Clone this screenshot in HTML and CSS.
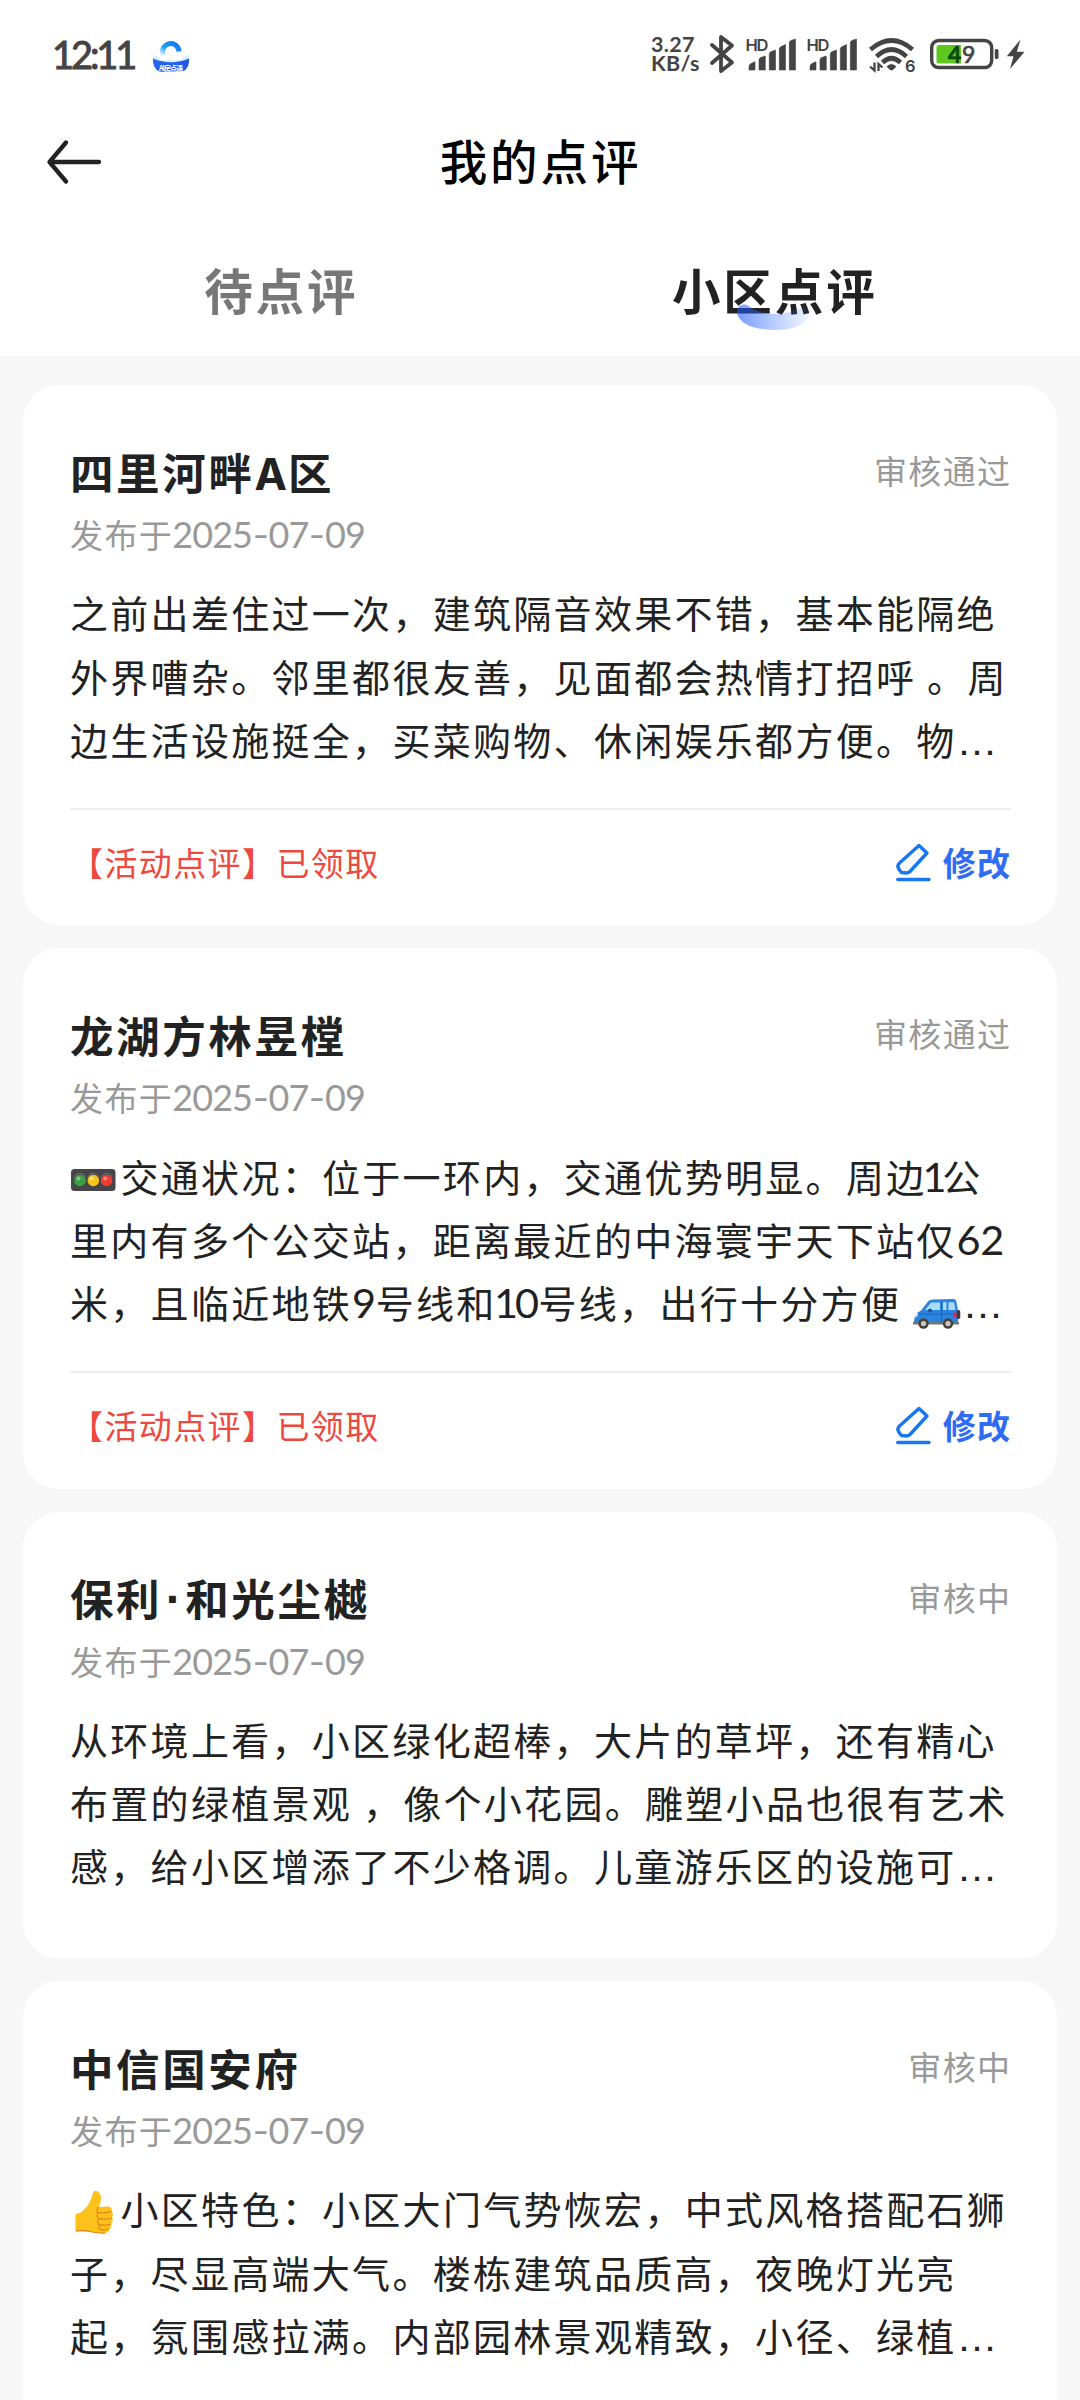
FILE: index.html
```html
<!DOCTYPE html>
<html lang="zh-CN">
<head>
<meta charset="utf-8">
<title>我的点评</title>
<link rel="stylesheet" href="styles.css">
</head>
<body>
<svg class="defs" width="0" height="0">
  <symbol id="edit" viewBox="0 0 38 40">
    <path d="M24 3.5 L32 11 L15 29.5 Q13.5 31 11 31 L6.5 30.5 Q3.5 27.5 2.8 24.5 Q3 22.5 4.5 21 Z" fill="none" stroke="#1677f0" stroke-width="3.4" stroke-linejoin="round"/>
    <path d="M2.8 37.5 H34" stroke="#1677f0" stroke-width="3.4" stroke-linecap="round"/>
  </symbol>
  <symbol id="signal" viewBox="745 32 52 44">
    <path d="M749 70 v-3 q0 -3 3 -4 l3 -1.3 v8.3z M759 70 V60 q0 -1.600 1.500 -2.400 L765.300 56 V70z M769.300 70 V54 q0 -1.500 1.500 -2.200 L775.500 50 V70z M779.300 70 V49 q0 -1.500 1.500 -2.200 L785.500 44.500 V70z M789.300 70 V43 q0 -1.800 1.500 -2.500 L795.500 39 V70z" fill="#444" stroke="#444" stroke-width=".6" stroke-linejoin="round"/>
    <text x="745.500" y="50.500" font-size="16.500" textLength="23" class="glyph-text">HD</text>
  </symbol>
</svg>

<header class="top">
  <div class="status-bar">
    <div class="status-left">
      <span class="clock">12:11</span>
      <svg class="app" width="36" height="36" viewBox="153 36 36 36">
        <defs>
          <linearGradient id="ring" x1="0" y1="1" x2="1" y2="0"><stop offset="0" stop-color="#d8f1ff"/><stop offset=".4" stop-color="#18a4f8"/><stop offset="1" stop-color="#1570f0"/></linearGradient>
          <linearGradient id="bowl" x1="0" y1="0" x2="1" y2="0"><stop offset="0" stop-color="#2468ee"/><stop offset="1" stop-color="#2257e6"/></linearGradient>
        </defs>
        <path d="M153 55 Q158 56 161 60 H181 Q184 56 189 55 V62 H153z" fill="#d9effd"/>
        <path d="M163 55 A8.300 8.300 0 1 1 179 51.500" fill="none" stroke="url(#ring)" stroke-width="5"/>
        <path d="M153 58.500 Q171 66 189 58.500 V62 Q188 72 178 72 H164 Q154 72 153 62z" fill="url(#bowl)"/>
        <text x="159" y="70.500" font-size="7" textLength="24" class="app-text">AI房点通</text>
      </svg>
    </div>
    <div class="status-right">
      <div class="speed"><span>3.27</span><span>KB/s</span></div>
      <svg width="27" height="44" viewBox="709 32 27 44"><path d="M712 45 L732 62.500 L721 71 V37 L732 45.500 L712 63" fill="none" stroke="#444" stroke-width="3.800" stroke-linejoin="round" stroke-linecap="round"/></svg>
      <svg width="52" height="44"><use href="#signal"/></svg>
      <svg width="52" height="44"><use href="#signal"/></svg>
      <svg width="51" height="44" viewBox="867 32 51 44" fill="none" stroke="#444">
        <path d="M870.500 49.500 Q891.500 31.500 912.500 49.500" stroke-width="4.600"/>
        <path d="M876.500 56.500 Q891.500 42.500 906.500 56.500" stroke-width="4.600"/>
        <path d="M882.500 62.500 Q891.500 54 900.500 62.500" stroke-width="4.600"/>
        <path d="M886.500 66.500 Q891.500 61.500 896.500 66.500 L892.800 70 Q891.500 70.800 890.200 70z" fill="#444" stroke="none"/>
        <path d="M874.500 62.500 V70.500 L870 66.500 M878.500 71 V64 L882.500 67.500" stroke-width="2.300"/>
        <text x="905" y="72" font-size="16.500" class="glyph-text">6</text>
      </svg>
      <svg width="71" height="44" viewBox="927 32 71 44">
        <rect x="931.700" y="40.500" width="60" height="27" rx="7" fill="#fff" stroke="#444" stroke-width="3.400"/>
        <path d="M939 45 H961 V63.500 H939 Q936.500 63.500 936.500 61 V47.500 Q936.500 45 939 45z" fill="#5ec81e"/>
        <rect x="994.800" y="49" width="3.700" height="10" rx="1.500" fill="#444"/>
        <text x="948" y="62.500" font-size="23" textLength="13.500" class="level low">4</text>
        <text x="962" y="62.500" font-size="23" class="level">9</text>
      </svg>
      <svg width="18" height="44" viewBox="1007 32 18 44"><path d="M1020.500 39.500 L1006.800 56.300 H1013.500 L1010 69 L1024.500 51.800 H1016.800z" fill="#444"/></svg>
    </div>
  </div>
  <div class="nav">
    <svg class="back" width="60" height="46" viewBox="44 139 60 46"><path d="M99 162 H50 M66 142.500 L49.500 162 L66 181.500" fill="none" stroke="#222" stroke-width="4.300" stroke-linecap="round" stroke-linejoin="round"/></svg>
    <h1 class="nav-title">我的点评</h1>
  </div>
  <div class="tabs">
    <div class="tab">待点评</div>
    <div class="tab active"><span class="tab-label">小区点评
      <svg class="swoosh" width="74" height="27" viewBox="0 0 74 27">
        <defs><linearGradient id="sw" x1="0" y1="0" x2="1" y2="0"><stop offset="0" stop-color="#1f5cff" stop-opacity=".6"/><stop offset="1" stop-color="#3a70ff" stop-opacity=".06"/></linearGradient></defs>
        <path d="M0 9 Q0 1 7 .5 Q11 .5 16 5 Q26 10 38 10 Q52 10 64 3.500 Q74 1 74 8 Q69 26 37 26 Q4 25 0 9z" fill="url(#sw)"/>
      </svg></span>
    </div>
  </div>
</header>

<main class="list">
  <article class="card">
    <div class="head"><h2 class="name">四里河畔<span class="latin">A</span>区</h2><span class="state">审核通过</span></div>
    <div class="date">发布于<span class="num">2025<span class="dash">-</span>07<span class="dash">-</span>09</span></div>
    <p class="body">
      <span class="line">之前出差住过一次，建筑隔音效果不错，基本能隔绝</span>
      <span class="line">外界嘈杂。邻里都很友善，见面都会热情打招呼 。周</span>
      <span class="line">边生活设施挺全，买菜购物、休闲娱乐都方便。物<span class="more">…</span></span>
    </p>
    <div class="foot"><span class="reward">【活动点评】已领取</span><span class="edit"><svg width="38" height="40"><use href="#edit"/></svg>修改</span></div>
  </article>

  <article class="card">
    <div class="head"><h2 class="name">龙湖方林昱樘</h2><span class="state">审核通过</span></div>
    <div class="date">发布于<span class="num">2025<span class="dash">-</span>07<span class="dash">-</span>09</span></div>
    <p class="body">
      <span class="line"><svg class="emoji" width="50.500" height="44" viewBox="0 0 50.500 44">
        <rect x="1" y="11" width="44.500" height="22" rx="3.500" fill="#46464a"/>
        <circle cx="10" cy="22.500" r="5.800" fill="#3d9f42"/><circle cx="23.300" cy="22.500" r="5.800" fill="#f6c21c"/><circle cx="36.600" cy="22.500" r="5.800" fill="#ef3b30"/>
        <circle cx="8.500" cy="20.500" r="2" fill="#7bc97d"/><circle cx="21.800" cy="20.500" r="2" fill="#fde58a"/><circle cx="35.100" cy="20.500" r="2" fill="#fb8a7c"/>
        <path d="M4.500 19 Q10 11.500 15.500 19 M17.800 19 Q23.300 11.500 28.800 19 M31 19 Q36.600 11.500 42 19" fill="none" stroke="#6a6a6e" stroke-width="1.200"/>
      </svg>交通状况：位于一环内，交通优势明显。周边<span class="num one">1</span>公</span>
      <span class="line">里内有多个公交站，距离最近的中海寰宇天下站仅<span class="num">62</span></span>
      <span class="line">米，且临近地铁<span class="num">9</span>号线和<span class="num"><span class="one ten">1</span>0</span>号线，出行十分方便 <svg class="emoji" width="50.500" height="44" viewBox="0 -6 50.500 44">
        <path d="M3 26 Q5 22 9 20.500 L16 11.500 Q17.500 9.500 21 9.500 L41 9 Q44 9 44.500 12 L46 21 V32 Q46 34 43 34 H6 Q2 34 2 31z" fill="#2b83e0"/>
        <path d="M13 20 L19 12.500 H28 V20z M31 12.300 H34.500 V20 H31z M36.500 12.300 H42 L43.500 20 H36.500z" fill="#a9dcf5"/>
        <path d="M29.500 12 V33 M6 24 H44" stroke="#1a66bd" stroke-width="1"/>
        <circle cx="18" cy="20.500" r="2" fill="#1d4f94"/>
        <rect x="44.500" y="20" width="3.800" height="9" rx="1.800" fill="#3a3a3e"/><rect x="42" y="22.500" width="2.600" height="5" fill="#e0245e"/>
        <path d="M1 32 H47 V34.500 H1z" fill="#6b7780"/>
        <path d="M3 23 Q6 22 6 25 L3.500 28z" fill="#e3f4ff"/>
        <circle cx="11.500" cy="33.500" r="5.200" fill="#4b4238"/><circle cx="11.500" cy="33.500" r="2.600" fill="#c9c9c4"/>
        <circle cx="36" cy="33.500" r="5.200" fill="#4b4238"/><circle cx="36" cy="33.500" r="2.600" fill="#c9c9c4"/>
      </svg><span class="more">…</span></span>
    </p>
    <div class="foot"><span class="reward">【活动点评】已领取</span><span class="edit"><svg width="38" height="40"><use href="#edit"/></svg>修改</span></div>
  </article>

  <article class="card plain">
    <div class="head"><h2 class="name">保利<span class="dot">·</span>和光尘樾</h2><span class="state">审核中</span></div>
    <div class="date">发布于<span class="num">2025<span class="dash">-</span>07<span class="dash">-</span>09</span></div>
    <p class="body">
      <span class="line">从环境上看，小区绿化超棒，大片的草坪，还有精心</span>
      <span class="line">布置的绿植景观 ，像个小花园。雕塑小品也很有艺术</span>
      <span class="line">感，给小区增添了不少格调。儿童游乐区的设施可<span class="more">…</span></span>
    </p>
  </article>

  <article class="card plain">
    <div class="head"><h2 class="name">中信国安府</h2><span class="state">审核中</span></div>
    <div class="date">发布于<span class="num">2025<span class="dash">-</span>07<span class="dash">-</span>09</span></div>
    <p class="body">
      <span class="line"><svg class="emoji" width="50.500" height="44" viewBox="0 0 50.500 44">
        <path d="M5.500 24 Q11 23.500 15 18.500 Q20 14 22.500 5 Q23 .5 26 .8 Q31 2 31 9 Q30.500 13 29 17 L39 16.500 Q42.500 17.500 41.500 21 Q44 23.500 42 27.500 Q44 31 41 33.500 Q42 37 39.500 38.500 Q39.500 43 34 43 Q24 43.500 18 41 Q12 40.500 5.500 41z" fill="#fcc21b"/>
        <path d="M29 17 Q26 19 27.500 23 M41.500 21.500 Q34 23.500 28.500 22.500 M42 28 Q35 30 29 28.500 M41 33.800 Q36 36 30 34.500 M39.500 38.500 Q35 40.500 30.500 39.500 M28.500 23 Q25.500 26 28.500 29 Q26.500 32 29.500 35 Q28 38 30.500 40 M6 41 Q12 40 18 41 Q26 43.500 35 43" fill="none" stroke="#e48c15" stroke-width="1.300"/>
      </svg>小区特色：小区大门气势恢宏，中式风格搭配石狮</span>
      <span class="line">子，尽显高端大气。楼栋建筑品质高，夜晚灯光亮</span>
      <span class="line">起，氛围感拉满。内部园林景观精致，小径、绿植<span class="more">…</span></span>
    </p>
  </article>
</main>
</body>
</html>
```
FILE: styles.css
```css
* { box-sizing: border-box; }
body {
  margin: 0;
  height: 2400px;
  overflow: hidden;
  background: #f7f7f7;
  color: #222;
  font-family: "Noto Sans CJK SC", sans-serif;
}
h1, h2, p { margin: 0; }
svg { display: block; flex: none; overflow: visible; }
.defs { position: absolute; }

.top { height: 356px; background: #fff; display: flex; flex-direction: column; }
.status-bar {
  height: 108px;
  padding: 0 55px 0 52px;
  display: flex;
  justify-content: space-between;
  align-items: center;
}
.status-left { display: flex; align-items: center; gap: 20px; }
.clock {
  width: 81px;
  font: 400 38px/44px Lato, sans-serif;
  letter-spacing: -3.100px;
  color: #444;
  -webkit-text-stroke: 1px #444;
  white-space: nowrap;
}
.status-right { display: flex; align-items: center; gap: 9px; }
.speed {
  width: 49px;
  display: flex;
  flex-direction: column;
  font: 700 21.500px/19.500px Lato, sans-serif;
  letter-spacing: .3px;
  color: #444;
  white-space: nowrap;
}
.glyph-text { font-family: Inter, sans-serif; font-weight: 600; fill: #444; stroke: none; }
.app-text { font-family: "Noto Sans CJK SC", sans-serif; font-weight: 700; fill: #fff; }
.level { font-family: Lato, sans-serif; font-weight: 400; fill: #444; stroke: #444; stroke-width: .7px; }
.low { fill: #0b4a10; stroke: #0b4a10; font-weight: 700; }

.nav {
  height: 108px;
  padding: 0 44px;
  display: grid;
  grid-template-columns: 60px 1fr 60px;
  align-items: center;
}
.nav-title {
  text-align: center;
  font-size: 47.500px;
  line-height: 60px;
  font-weight: 500;
  letter-spacing: 2.900px;
  color: #000;
  padding: 0 0 5px 1px;
}
.tabs { flex: 1; display: flex; padding: 0 57px 0 34px; }
.tab {
  flex: 1;
  text-align: center;
  font-size: 48.500px;
  line-height: 146px;
  font-weight: 700;
  letter-spacing: 2.900px;
  color: #777;
  height: 140px;
}
.active { color: #222; }
.tab-label { position: relative; left: -1px; white-space: nowrap; }
.swoosh { position: absolute; left: 65px; bottom: -7px; }

.back { margin-top: 0; }

.list { padding: 29px 23px 0; display: flex; flex-direction: column; gap: 23px; }
.card {
  height: 540.300px;
  padding: 56.500px 46px 0 47px;
  border-radius: 36px;
  background: #fff;
  flex: none;
}
.plain { height: 446.500px; }
.head { display: flex; align-items: center; justify-content: space-between; height: 60px; }
.name { font-size: 43.500px; line-height: 60px; font-weight: 700; letter-spacing: 2.600px; white-space: nowrap; }
.latin { font-family: Inter, sans-serif; line-height: 1; letter-spacing: 1px; }
.dot { display: inline-block; width: 23px; text-align: center; line-height: 1; letter-spacing: 0; font-family: "Liberation Sans", sans-serif; font-size: 48px; }
.state { font-size: 33px; line-height: 58px; padding-bottom: 3px; letter-spacing: 1.400px; color: #999; margin-right: -.5px; }
.date { margin-top: 8.500px; font-size: 33px; line-height: 48px; height: 48px; letter-spacing: 1.400px; color: #999; white-space: nowrap; }
.num { font-family: Lato, sans-serif; line-height: 1; font-size: 1.090em; letter-spacing: -.4px; }
.date .num { letter-spacing: -.9px; margin-left: -1px; }
.dash { display: inline-block; line-height: 1; margin: 0 2px; transform: scaleX(1.250); }
.one { margin: 0 -4px; }
.ten { margin: 0 -2.700px; }
.body { margin-top: 22.300px; font-size: 38px; letter-spacing: 2.300px; }
.line { display: block; height: 63.300px; line-height: 63.300px; white-space: nowrap; }
.more { font-family: "Liberation Sans", sans-serif; font-size: 41px; line-height: 1; }
.emoji { display: inline-block; vertical-align: -10px; }
.foot {
  margin-top: 37.700px;
  border-top: 2px solid #eee;
  height: 106px;
  display: flex;
  align-items: center;
  justify-content: space-between;
  font-size: 33px;
  letter-spacing: 1.400px;
}
.reward { color: #ef483e; }
.edit { display: flex; align-items: center; gap: 10px; color: #2f6bf3; font-weight: 700; margin-right: -.5px; }
```
